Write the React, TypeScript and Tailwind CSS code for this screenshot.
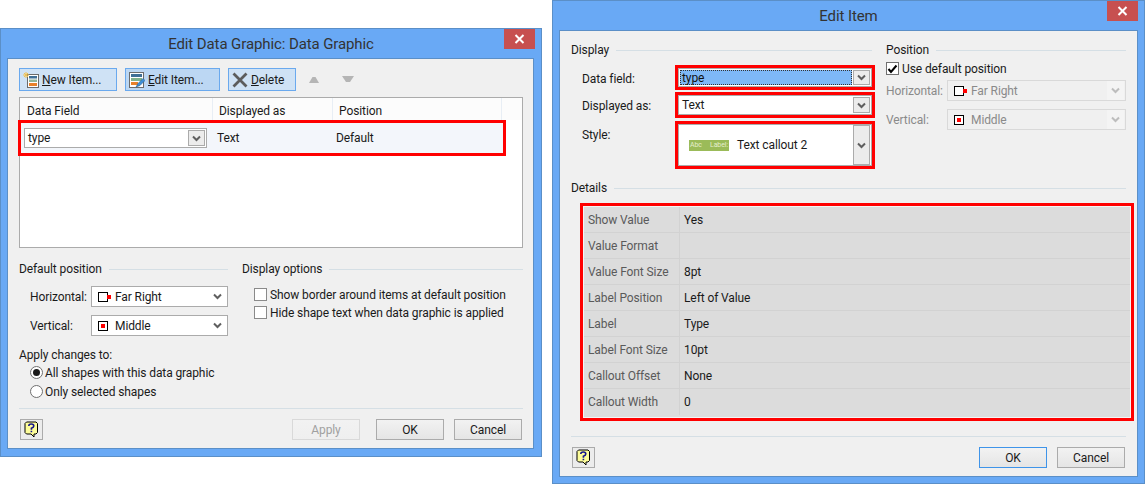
import React from 'react';

const font = { fontFamily: 'Roboto, sans-serif' };

const CloseBtn = () => (
  <div className="w-[31px] h-[20px] bg-[#c75050] flex items-center justify-center">
    <svg width="11" height="10" viewBox="0 0 11 10">
      <path d="M1.5 1 L9.5 9 M9.5 1 L1.5 9" stroke="#fff" strokeWidth="2" />
    </svg>
  </div>
);

const Chevron = ({ color = '#5f5f5f' }: { color?: string }) => (
  <svg width="9" height="7" viewBox="0 0 9 7">
    <path d="M1 1.5 L4.5 5 L8 1.5" fill="none" stroke={color} strokeWidth="2" />
  </svg>
);

const Heading = ({ label, className }: { label: string; className?: string }) => (
  <div className={`flex items-center gap-[7px] h-[16px] ${className ?? ''}`}>
    <span className="text-[#1a1a1a]">{label}</span>
    <div className="flex-1 h-px bg-[#d5dfe5]" />
  </div>
);

const PosIcon = ({ kind }: { kind: 'right' | 'middle' }) =>
  kind === 'right' ? (
    <svg width="14" height="10" viewBox="0 0 14 10" className="shrink-0">
      <rect x="0.5" y="0.5" width="9" height="9" fill="#fff" stroke="#000" />
      <rect x="9" y="3" width="4" height="4" fill="#f00" />
    </svg>
  ) : (
    <svg width="14" height="10" viewBox="0 0 14 10" className="shrink-0">
      <rect x="0.5" y="0.5" width="9" height="9" fill="#fff" stroke="#000" />
      <rect x="3" y="3" width="4" height="4" fill="#f00" />
    </svg>
  );

const PosSelect = ({ kind, label, disabled }: { kind: 'right' | 'middle'; label: string; disabled?: boolean }) => (
  <div
    className={`flex items-center h-[21px] pl-[6px] border ${
      disabled ? 'w-[179px] border-[#d9d9d9] bg-[#f0f0f0] text-[#8a8a8a]' : 'w-[137px] border-[#ababab] bg-white text-[#1a1a1a]'
    }`}
  >
    <PosIcon kind={kind} />
    <span className="ml-[3px] flex-1">{label}</span>
    <span className={`flex items-center justify-center w-[17px] h-full mr-px ${disabled ? 'bg-[#f4f4f4]' : ''}`}>
      <Chevron color={disabled ? '#bdbdbd' : '#5f5f5f'} />
    </span>
  </div>
);

const HelpBtn = () => (
  <div className="w-[23px] h-[21px] border border-[#ababab] bg-[#ececec] flex items-center justify-center">
    <svg width="15" height="17" viewBox="0 0 15 17">
      <path d="M2.5 1 H12 L13.5 2.5 V11.5 L12 13 H10 V16 L7 13 H2.5 L1 11.5 V2.5 Z" fill="#fdfd9a" stroke="#000" />
      <path d="M4.8 5 Q4.8 3 7.2 3 Q9.8 3 9.8 5 Q9.8 6.3 7.4 7.3 V8.8 M7.4 9.8 V11.3" fill="none" stroke="#14148c" strokeWidth="1.6" />
    </svg>
  </div>
);

const DlgBtn = ({ label, variant }: { label: string; variant?: 'disabled' | 'default' }) => (
  <div
    className={`w-[68px] h-[21px] border flex items-center justify-center bg-gradient-to-b from-[#f2f2f2] to-[#e5e5e5] ${
      variant === 'disabled'
        ? 'border-[#d9d9d9] from-[#efefef] to-[#efefef] text-[#a0a0a0]'
        : variant === 'default'
          ? 'border-[#3f94e9] text-[#1a1a1a]'
          : 'border-[#ababab] text-[#1a1a1a]'
    }`}
  >
    {label}
  </div>
);

const ToolBtn = ({ icon, label, width, active }: { icon: React.ReactNode; label: React.ReactNode; width: string; active?: boolean }) => (
  <div
    className={`${width} h-[23px] border border-[#6aa9ee] flex items-center pl-[3px] gap-[3px] text-[#1a1a1a] ${
      active ? 'bg-[#bcd7f3]' : 'bg-[#cfe2f5]'
    }`}
  >
    {icon}
    <span>{label}</span>
  </div>
);

const NewIcon = () => (
  <svg width="16" height="16" viewBox="0 0 16 16" className="shrink-0">
    <rect x="4.5" y="2.5" width="11" height="13" fill="#fff" stroke="#6b6b6b" />
    <rect x="6" y="4" width="8" height="2.5" fill="#3f6f96" />
    <rect x="6" y="7.5" width="8" height="2.5" fill="#8fb59a" />
    <rect x="6" y="11" width="8" height="3" fill="#e8812b" />
    <path d="M3 0 V6 M0 3 H6 M1 1 L5 5 M5 1 L1 5" stroke="#f2c14e" strokeWidth="1" />
  </svg>
);

const EditIcon = () => (
  <svg width="16" height="16" viewBox="0 0 16 16" className="shrink-0">
    <rect x="0.5" y="0.5" width="14" height="15" fill="#fff" stroke="#6b6b6b" />
    <rect x="2" y="2" width="11" height="3" fill="#3f6f96" />
    <rect x="2" y="6" width="11" height="3" fill="#7fb08c" />
    <rect x="2" y="10" width="7" height="3" fill="#e8812b" />
    <path d="M7 15 L9 11.5 L14 6.5 L16 8.5 L11 13.5 Z" fill="#3d8fd6" stroke="#2b5f8f" strokeWidth="0.6" />
  </svg>
);

const DeleteIcon = () => (
  <svg width="16" height="16" viewBox="0 0 16 16" className="shrink-0">
    <path d="M1.5 1.5 L14.5 14.5 M14.5 1.5 L1.5 14.5" stroke="#5c5c5c" strokeWidth="2.8" />
  </svg>
);

const Check = ({ checked }: { checked?: boolean }) => (
  <div className={`w-[13px] h-[13px] border flex items-center justify-center bg-white shrink-0 ${checked ? 'border-[#707070]' : 'border-[#8a8a8a] bg-[#f4f4f4]'}`}>
    {checked && (
      <svg width="11" height="10" viewBox="0 0 11 10">
        <path d="M1.5 5 L4 8 L9.5 1.5" fill="none" stroke="#000" strokeWidth="2" />
      </svg>
    )}
  </div>
);

const Radio = ({ on }: { on?: boolean }) => (
  <div className="w-[13px] h-[13px] rounded-full border border-[#707070] bg-white flex items-center justify-center shrink-0">
    {on && <div className="w-[7px] h-[7px] rounded-full bg-[#1a1a1a]" />}
  </div>
);

const RedBox = ({ className, children }: { className: string; children: React.ReactNode }) => (
  <div className={`border-[3px] border-[#ff0000] ${className}`}>{children}</div>
);

const ComboArrow = ({ className }: { className: string }) => (
  <div className={`w-[17px] border border-[#ababab] bg-[#ececec] flex items-center justify-center shrink-0 ${className}`}>
    <Chevron />
  </div>
);

const details = [
  ['Show Value', 'Yes'],
  ['Value Format', ''],
  ['Value Font Size', '8pt'],
  ['Label Position', 'Left of Value'],
  ['Label', 'Type'],
  ['Label Font Size', '10pt'],
  ['Callout Offset', 'None'],
  ['Callout Width', '0'],
];

const DataGraphicDialog = () => (
  <div className="mt-[28px] w-[542px] h-[429px] bg-[#69a9f5] border border-[#5b8fc7] flex flex-col">
    <div className="h-[29px] relative flex items-center justify-center text-[15px] text-[#333]">
      Edit Data Graphic: Data Graphic
      <div className="absolute right-[6px] top-0">
        <CloseBtn />
      </div>
    </div>
    <div className="ml-[6px] mr-[7px] h-[391px] bg-[#f0f0f0] border border-[#5b8fc7] pt-[9px] pl-[11px] pr-[10px]">
      <div className="flex items-center h-[23px]">
        <ToolBtn icon={<NewIcon />} label={<><u>N</u>ew Item...</>} width="w-[98px]" />
        <div className="ml-[8px]">
          <ToolBtn icon={<EditIcon />} label={<><u>E</u>dit Item...</>} width="w-[95px]" active />
        </div>
        <div className="ml-[8px]">
          <ToolBtn icon={<DeleteIcon />} label={<><u>D</u>elete</>} width="w-[68px]" />
        </div>
        <svg width="10" height="7" viewBox="0 0 10 7" className="ml-[13px]">
          <path d="M0 7 L3.5 1 H6.5 L10 7 Z" fill="#b5b5b5" />
        </svg>
        <svg width="12" height="7" viewBox="0 0 12 7" className="ml-[23px]">
          <path d="M0 0 H12 L8 6 H4 Z" fill="#b5b5b5" />
        </svg>
      </div>
      <div className="mt-[6px] h-[151px] border border-[#ababab] bg-white">
        <div className="flex h-[22px] items-center bg-[#fcfcfc] text-[#1a1a1a]">
          <div className="w-[193px] h-full pl-[7px] pt-[3px] flex items-center border-r border-[#e8eef5]">Data Field</div>
          <div className="w-[120px] h-full pl-[6px] pt-[3px] flex items-center border-r border-[#e8eef5]">Displayed as</div>
          <div className="w-[169px] h-full pl-[6px] pt-[3px] flex items-center border-r border-[#e8eef5]">Position</div>
        </div>
        <RedBox className="-ml-[2px] w-[488px] h-[36px] bg-[#f3f6fb] flex items-center text-[#1a1a1a]">
          <div className="ml-[3px] w-[183px] h-[20px] border border-[#ababab] bg-white flex items-center pl-[3px]">
            <span className="flex-1">type</span>
            <ComboArrow className="h-[16px] mr-px" />
          </div>
          <span className="ml-[10px] w-[119px]">Text</span>
          <span>Default</span>
        </RedBox>
      </div>
      <div className="flex mt-[13px]">
        <div className="w-[209px]">
          <Heading label="Default position" />
          <div className="mt-[9px] flex items-center pl-[11px] gap-[5px] text-[#1a1a1a]">
            <span className="w-[56px]">Horizontal:</span>
            <PosSelect kind="right" label="Far Right" />
          </div>
          <div className="mt-[8px] flex items-center pl-[11px] gap-[5px] text-[#1a1a1a]">
            <span className="w-[56px]">Vertical:</span>
            <PosSelect kind="middle" label="Middle" />
          </div>
        </div>
        <div className="ml-[14px] flex-1">
          <Heading label="Display options" />
          <div className="mt-[11px] pl-[12px] flex flex-col gap-[5px] text-[#1a1a1a]">
            <div className="flex items-center h-[13px] gap-[3px]">
              <Check />
              <span>Show border around items at default position</span>
            </div>
            <div className="flex items-center h-[13px] gap-[3px]">
              <Check />
              <span>Hide shape text when data graphic is applied</span>
            </div>
          </div>
        </div>
      </div>
      <div className="mt-[11px] text-[#1a1a1a] leading-[16px]">Apply changes to:</div>
      <div className="mt-[3px] pl-[11px] flex flex-col gap-[6px] text-[#1a1a1a]">
        <div className="flex items-center h-[13px] gap-[2px]">
          <Radio on />
          <span>All shapes with this data graphic</span>
        </div>
        <div className="flex items-center h-[13px] gap-[2px]">
          <Radio />
          <span>Only selected shapes</span>
        </div>
      </div>
      <div className="mt-[10px] h-px bg-[#d5dfe5]" />
      <div className="mt-[10px] flex items-center pl-px">
        <HelpBtn />
        <div className="ml-auto flex items-center mr-px">
          <DlgBtn label="Apply" variant="disabled" />
          <div className="ml-[16px]">
            <DlgBtn label="OK" />
          </div>
          <div className="ml-[10px]">
            <DlgBtn label="Cancel" />
          </div>
        </div>
      </div>
    </div>
  </div>
);

const EditItemDialog = () => (
  <div className="ml-[10px] w-[593px] h-[484px] bg-[#69a9f5] border border-[#5b8fc7] flex flex-col">
    <div className="h-[29px] relative flex items-center justify-center text-[15px] text-[#333]">
      Edit Item
      <div className="absolute right-[6px] top-0">
        <CloseBtn />
      </div>
    </div>
    <div className="ml-[6px] mr-[6px] h-[447px] bg-[#f0f0f0] border border-[#5b8fc7] pt-[11px] pl-[11px] pr-[11px] text-[#1a1a1a]">
      <div className="flex">
        <div className="w-[301px]">
          <Heading label="Display" />
          <div className="flex">
            <div className="w-[104px] shrink-0 pl-[11px] flex flex-col">
              <div className="h-[27px] mt-[7px] flex items-center">Data field:</div>
              <div className="h-[27px] flex items-center">Displayed as:</div>
              <div className="mt-[8px] h-[16px] flex items-center">Style:</div>
            </div>
            <div className="flex flex-col gap-[2px] w-[200px] mt-[7px] shrink-0">
              <RedBox className="h-[25px] flex">
                <div className="flex-1 border border-[#ababab] bg-white p-px flex">
                  <div className="flex-1 bg-[#7eb8f7] border border-dotted border-[#333] flex items-center pl-px text-[#111]">type</div>
                  <ComboArrow className="h-full ml-px" />
                </div>
              </RedBox>
              <RedBox className="h-[26px] flex">
                <div className="flex-1 border border-[#ababab] bg-white flex items-center pl-[3px] pr-px">
                  <span className="flex-1">Text</span>
                  <ComboArrow className="h-[16px]" />
                </div>
              </RedBox>
              <RedBox className="h-[48px] mt-px flex">
                <div className="flex-1 border border-[#ababab] bg-white flex items-center pl-[10px] pr-px">
                  <div className="w-[40px] h-[11px] bg-[#9bbb59] text-[#e4eecb] text-[7px] leading-[11px] flex justify-between px-px">
                    <span>Abc</span>
                    <span>Label:</span>
                  </div>
                  <span className="ml-[8px] flex-1">Text callout 2</span>
                  <ComboArrow className="h-[40px]" />
                </div>
              </RedBox>
            </div>
          </div>
        </div>
        <div className="ml-[14px] w-[240px]">
          <Heading label="Position" />
          <div className="mt-[4px] flex items-center h-[13px] gap-[3px]">
            <Check checked />
            <span>Use default position</span>
          </div>
          <div className="mt-[5px] flex items-center text-[#8a8a8a]">
            <span className="w-[61px]">Horizontal:</span>
            <PosSelect kind="right" label="Far Right" disabled />
          </div>
          <div className="mt-[8px] flex items-center text-[#8a8a8a]">
            <span className="w-[61px]">Vertical:</span>
            <PosSelect kind="middle" label="Middle" disabled />
          </div>
        </div>
      </div>
      <Heading label="Details" className="mt-[11px]" />
      <RedBox className="mt-[7px] ml-[9px] w-[554px] h-[218px]">
        <div className="border border-[#f4f4f4] h-full bg-[#dcdcdc]">
          {details.map(([k, v]) => (
            <div key={k} className="flex h-[26px] border-b border-[#d2d2d2] last:border-b-0">
              <div className="w-[96px] pl-[4px] flex items-center text-[#5a5a5a] border-r border-[#d2d2d2]">{k}</div>
              <div className="pl-[4px] flex items-center">{v}</div>
            </div>
          ))}
        </div>
      </RedBox>
      <div className="mt-[15px] h-px bg-[#d5dfe5]" />
      <div className="mt-[10px] flex items-center pl-px">
        <HelpBtn />
        <div className="ml-auto flex items-center mr-px">
          <DlgBtn label="OK" variant="default" />
          <div className="ml-[10px]">
            <DlgBtn label="Cancel" />
          </div>
        </div>
      </div>
    </div>
  </div>
);

export default function App() {
  return (
    <div className="w-[1145px] h-[484px] bg-white flex items-start overflow-hidden text-[12px] leading-[16px] tracking-[-0.1px]" style={font}>
      <DataGraphicDialog />
      <EditItemDialog />
    </div>
  );
}
